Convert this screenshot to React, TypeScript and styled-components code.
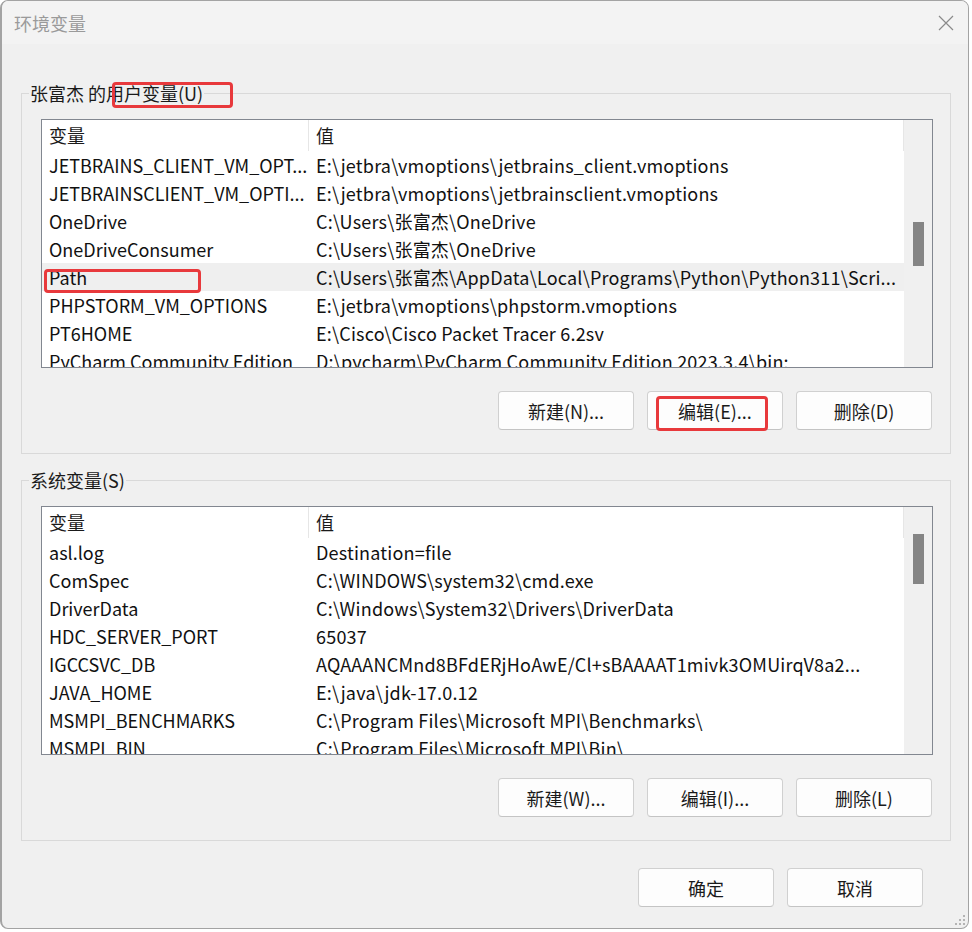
import React from 'react';
import styled, { createGlobalStyle } from 'styled-components';

const GlobalStyle = createGlobalStyle`
  html, body {
    margin: 0;
    padding: 0;
    background: #ffffff;
  }
  body {
    font-family: "Noto Sans CJK SC", "Noto Sans", sans-serif;
    color: #1a1a1a;
  }
`;

type Row = [string, string];

const userVars: Row[] = [
  ['JETBRAINS_CLIENT_VM_OPT...', 'E:\\jetbra\\vmoptions\\jetbrains_client.vmoptions'],
  ['JETBRAINSCLIENT_VM_OPTI...', 'E:\\jetbra\\vmoptions\\jetbrainsclient.vmoptions'],
  ['OneDrive', 'C:\\Users\\张富杰\\OneDrive'],
  ['OneDriveConsumer', 'C:\\Users\\张富杰\\OneDrive'],
  ['Path', 'C:\\Users\\张富杰\\AppData\\Local\\Programs\\Python\\Python311\\Scri...'],
  ['PHPSTORM_VM_OPTIONS', 'E:\\jetbra\\vmoptions\\phpstorm.vmoptions'],
  ['PT6HOME', 'E:\\Cisco\\Cisco Packet Tracer 6.2sv'],
  ['PyCharm Community Edition', 'D:\\pycharm\\PyCharm Community Edition 2023.3.4\\bin;'],
];

const systemVars: Row[] = [
  ['asl.log', 'Destination=file'],
  ['ComSpec', 'C:\\WINDOWS\\system32\\cmd.exe'],
  ['DriverData', 'C:\\Windows\\System32\\Drivers\\DriverData'],
  ['HDC_SERVER_PORT', '65037'],
  ['IGCCSVC_DB', 'AQAAANCMnd8BFdERjHoAwE/Cl+sBAAAAT1mivk3OMUirqV8a2...'],
  ['JAVA_HOME', 'E:\\java\\jdk-17.0.12'],
  ['MSMPI_BENCHMARKS', 'C:\\Program Files\\Microsoft MPI\\Benchmarks\\'],
  ['MSMPI_BIN', 'C:\\Program Files\\Microsoft MPI\\Bin\\'],
];

const Window = styled.div`
  position: relative;
  box-sizing: border-box;
  width: 969px;
  height: 929px;
  background: #f0f0f0;
  border: 1px solid #a3a3a3;
  border-left-width: 2px;
  border-radius: 8px;
  overflow: hidden;
  display: flex;
  flex-direction: column;
`;

const TitleBar = styled.div`
  height: 43px;
  flex: none;
  background: #f3f3f3;
  display: flex;
  align-items: center;
  justify-content: space-between;
  padding: 0 14px 0 12px;
`;

const Title = styled.span`
  font-size: 18px;
  color: #9a9a9a;
  line-height: 24px;
`;

const Body = styled.div`
  padding: 37px 17px 0 19px;
  display: flex;
  flex-direction: column;
`;

const Group = styled.fieldset<{ $gap?: number }>`
  margin: ${({ $gap }) => $gap ?? 0}px 0 0 0;
  padding: 0 17px 23px 19px;
  border: 1px solid #d9d9d9;
  min-width: 0;
`;

const Legend = styled.legend`
  margin-left: -12px;
  padding: 0 1px;
  font-size: 18px;
  line-height: 24px;
  color: #1a1a1a;
`;

const ListBox = styled.div`
  margin-top: 14px;
  height: 249px;
  box-sizing: border-box;
  border: 1px solid #828790;
  background: #ffffff;
  display: flex;
  overflow: hidden;
`;

const Table = styled.div`
  width: 862px;
  flex: none;
  display: flex;
  flex-direction: column;
`;

const HeaderRow = styled.div`
  display: grid;
  grid-template-columns: 266px 1fr;
  height: 31px;
  flex: none;
  border-right: 1px solid #e6e6e6;
`;

const HeaderCell = styled.div<{ $divider?: boolean }>`
  font-size: 18px;
  line-height: 30px;
  padding-left: 7px;
  border-left: ${({ $divider }) => ($divider ? '1px solid #e6e6e6' : 'none')};
`;

const DataRow = styled.div<{ $selected?: boolean }>`
  display: grid;
  grid-template-columns: 266px 1fr;
  height: 28px;
  flex: none;
  background: ${({ $selected }) => ($selected ? '#efefef' : 'transparent')};
`;

const Cell = styled.div<{ $second?: boolean }>`
  font-size: 18px;
  line-height: 28px;
  white-space: nowrap;
  overflow: hidden;
  padding-left: ${({ $second }) => ($second ? 8 : 7)}px;
  letter-spacing: ${({ $second }) => ($second ? '0.2px' : '0')};
  color: #111;
`;

const ScrollTrack = styled.div`
  flex: 1;
  background: #f0f0f0;
  display: flex;
  justify-content: center;
`;

const Thumb = styled.div<{ $top: number; $height: number }>`
  margin-top: ${({ $top }) => $top}px;
  width: 11px;
  height: ${({ $height }) => $height}px;
  background: #858585;
`;

const ButtonRow = styled.div<{ $top?: number }>`
  display: flex;
  justify-content: flex-end;
  gap: 13px;
  margin-top: ${({ $top }) => $top ?? 23}px;
  padding-right: 1px;
`;

const Footer = styled(ButtonRow)`
  padding-right: 28px;
`;

const Button = styled.button`
  width: 136px;
  height: 39px;
  box-sizing: border-box;
  background: #fdfdfd;
  border: 1px solid #d0d0d0;
  border-bottom-color: #c4c4c4;
  border-radius: 4px;
  font-family: "Noto Sans CJK SC", "Noto Sans", sans-serif;
  font-size: 18px;
  color: #1a1a1a;
  padding: 0;
`;

const Mark = styled.div`
  position: absolute;
  box-sizing: border-box;
  border: 3px solid #e8393c;
  border-radius: 4px;
  pointer-events: none;
`;

const Grip = styled.svg`
  position: absolute;
  right: 2px;
  bottom: 2px;
`;

const CloseIcon = () => (
  <svg width="16" height="16" viewBox="0 0 16 16">
    <path d="M1 1 L15 15 M15 1 L1 15" stroke="#8a8a8a" strokeWidth="1.2" fill="none" />
  </svg>
);

const VarList: React.FC<{ rows: Row[]; selected?: number; thumbTop: number; thumbHeight: number }> = ({
  rows,
  selected,
  thumbTop,
  thumbHeight,
}) => (
  <ListBox>
    <Table>
      <HeaderRow>
        <HeaderCell>变量</HeaderCell>
        <HeaderCell $divider>值</HeaderCell>
      </HeaderRow>
      {rows.map(([k, v], i) => (
        <DataRow key={k} $selected={i === selected}>
          <Cell>{k}</Cell>
          <Cell $second>{v}</Cell>
        </DataRow>
      ))}
    </Table>
    <ScrollTrack>
      <Thumb $top={thumbTop} $height={thumbHeight} />
    </ScrollTrack>
  </ListBox>
);

const App: React.FC = () => {
  return (
    <>
      <GlobalStyle />
      <Window>
        <TitleBar>
          <Title>环境变量</Title>
          <CloseIcon />
        </TitleBar>
        <Body>
          <Group>
            <Legend>张富杰 的用户变量(U)</Legend>
            <VarList rows={userVars} selected={4} thumbTop={102} thumbHeight={44} />
            <ButtonRow>
              <Button>新建(N)...</Button>
              <Button>编辑(E)...</Button>
              <Button>删除(D)</Button>
            </ButtonRow>
          </Group>
          <Group $gap={14}>
            <Legend>系统变量(S)</Legend>
            <VarList rows={systemVars} thumbTop={27} thumbHeight={50} />
            <ButtonRow>
              <Button>新建(W)...</Button>
              <Button>编辑(I)...</Button>
              <Button>删除(L)</Button>
            </ButtonRow>
          </Group>
          <Footer $top={27}>
            <Button>确定</Button>
            <Button>取消</Button>
          </Footer>
        </Body>
        <Mark style={{ left: 110, top: 81, width: 121, height: 26 }} />
        <Mark style={{ left: 42, top: 268, width: 157, height: 24 }} />
        <Mark style={{ left: 654, top: 395, width: 112, height: 35 }} />
        <Grip width="11" height="11" viewBox="0 0 11 11">
          <rect x="8" y="0" width="2" height="2" fill="#b4b4b4" />
          <rect x="4" y="4" width="2" height="2" fill="#b4b4b4" />
          <rect x="8" y="4" width="2" height="2" fill="#b4b4b4" />
          <rect x="0" y="8" width="2" height="2" fill="#b4b4b4" />
          <rect x="4" y="8" width="2" height="2" fill="#b4b4b4" />
          <rect x="8" y="8" width="2" height="2" fill="#b4b4b4" />
        </Grip>
      </Window>
    </>
  );
};

export default App;
